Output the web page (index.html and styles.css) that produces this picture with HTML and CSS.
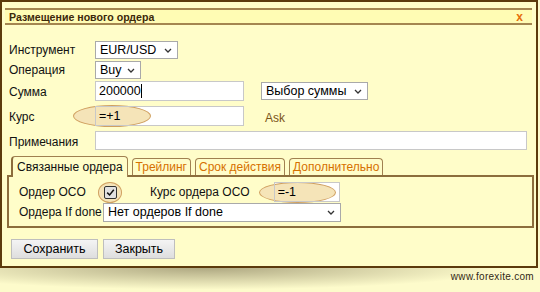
FILE: index.html
```html
<!DOCTYPE html>
<html lang="ru">

<head>
    <meta charset="UTF-8">
    <meta name="viewport" content="width=device-width, initial-scale=1.0">
    <title>Размещение нового ордера</title>
    <link rel="stylesheet" href="styles.css">
</head>

<body>
    <div class="dialog">
        <div class="titlebar">
            <span class="title">Размещение нового ордера</span>
            <span class="close">x</span>
        </div>
        <form class="order">
            <div class="row row-sel">
                <label class="lbl">Инструмент</label>
                <span class="selbox">
                    <select class="sel sel-instr"><option>EUR/USD</option></select>
                    <svg class="chev" width="8" height="5" viewBox="0 0 8 5"><path d="M1 1 L4 4 L7 1" fill="none" stroke="#333" stroke-width="1.3"/></svg>
                </span>
            </div>
            <div class="row row-sel">
                <label class="lbl">Операция</label>
                <span class="selbox">
                    <select class="sel sel-op"><option>Buy</option></select>
                    <svg class="chev" width="8" height="5" viewBox="0 0 8 5"><path d="M1 1 L4 4 L7 1" fill="none" stroke="#333" stroke-width="1.3"/></svg>
                </span>
            </div>
            <div class="row row-txt">
                <label class="lbl">Сумма</label>
                <div class="field">
                    <input class="txt txt-mid" type="text" value="200000">
                    <span class="caret"></span>
                </div>
                <span class="selbox sel-sum">
                    <select class="sel"><option>Выбор суммы</option></select>
                    <svg class="chev" width="8" height="5" viewBox="0 0 8 5"><path d="M1 1 L4 4 L7 1" fill="none" stroke="#333" stroke-width="1.3"/></svg>
                </span>
            </div>
            <div class="row row-txt">
                <label class="lbl">Курс</label>
                <div class="field">
                    <span class="oval oval-rate"></span>
                    <input class="txt txt-mid" type="text" value="=+1">
                </div>
                <span class="ask">Ask</span>
            </div>
            <div class="row row-note">
                <label class="lbl">Примечания</label>
                <input class="txt txt-wide" type="text">
            </div>

            <!-- вкладки -->
            <div class="tabs">
                <span class="tab active">Связанные ордера</span>
                <span class="tab">Трейлинг</span>
                <span class="tab">Срок действия</span>
                <span class="tab">Дополнительно</span>
            </div>
            <div class="panel">
                <div class="prow">
                    <label class="plbl">Ордер OCO</label>
                    <div class="field field-check">
                        <span class="oval oval-check"></span>
                        <span class="check">
                            <svg width="9" height="9" viewBox="0 0 9 9"><path d="M1.2 4.6 L3.6 7 L7.8 1.8" fill="none" stroke="#111" stroke-width="1.5"/></svg>
                        </span>
                    </div>
                    <label class="plbl plbl-rate">Курс ордера OCO</label>
                    <div class="field field-oco">
                        <span class="oval oval-oco"></span>
                        <input class="txt txt-oco" type="text" value="=-1">
                    </div>
                </div>
                <div class="prow">
                    <label class="plbl">Ордера If done</label>
                    <span class="selbox">
                        <select class="sel sel-done"><option>Нет ордеров If done</option></select>
                        <svg class="chev" width="8" height="5" viewBox="0 0 8 5"><path d="M1 1 L4 4 L7 1" fill="none" stroke="#333" stroke-width="1.3"/></svg>
                    </span>
                </div>
            </div>

            <div class="buttons">
                <button type="submit" class="btn btn-save">Сохранить</button>
                <button type="button" class="btn btn-close">Закрыть</button>
            </div>
        </form>
    </div>
    <div class="footer">
        <span class="site">www.forexite.com</span>
    </div>
</body>

</html>
```

FILE: styles.css
```css
body {
    margin: 0;
    padding: 0;
    background: rgb(253, 251, 203);
    font-family: "Liberation Sans", Arial, sans-serif;
    font-size: 12px;
    color: rgb(17, 17, 17);
}

.dialog {
    width: 538px;
    height: 268px;
    box-sizing: border-box;
    border: 2px solid rgb(92, 58, 12);
    background: rgb(255, 253, 201);
    padding-top: 6px;
}

.titlebar {
    margin: 0 4px 0 3px;
    height: 13px;
    border-top: 2px solid rgb(164, 134, 80);
    border-bottom: 2px solid rgb(164, 134, 80);
    background: rgb(255, 252, 180);
    display: flex;
    justify-content: space-between;
    align-items: center;
    padding: 0 9px 0 4px;
}

.title {
    font-size: 10.6px;
    font-weight: bold;
    color: rgb(60, 40, 10);
}

.close {
    font-size: 12px;
    font-weight: bold;
    color: rgb(230, 110, 10);
}

.order {
    padding: 16px 0 0 7px;
}

.row {
    display: flex;
    align-items: center;
    white-space: nowrap;
}

.row-sel {
    height: 20px;
    align-items: flex-start;
}

.row-txt,
.row-note {
    height: 25px;
    align-items: flex-start;
}

.lbl {
    width: 86px;
    padding-top: 3px;
}

.row-sel .lbl {
    padding-top: 2px;
}

.row-txt .lbl,
.row-note .lbl {
    padding-top: 4px;
}

/* выпадающие списки */
.selbox {
    position: relative;
    display: inline-flex;
}

.chev {
    position: absolute;
    right: 6px;
    top: 7px;
    pointer-events: none;
}

.sel {
    appearance: none;
    -webkit-appearance: none;
    font-family: "Liberation Sans", Arial, sans-serif;
    font-size: 12.5px;
    height: 18px;
    padding: 0 18px 0 4px;
    border: 1px solid rgb(169, 169, 169);
    border-radius: 0;
    background: white;
    color: black;
}

.sel-instr {
    width: 83px;
}

.sel-op {
    width: 46px;
}

.sel-sum {
    margin: 1px 0 0 17px;
}

.sel-sum .sel {
    width: 107px;
}

.sel-done {
    width: 238px;
    height: 19px;
}

.txt {
    font-family: "Liberation Sans", Arial, sans-serif;
    font-size: 12.5px;
    height: 20px;
    box-sizing: border-box;
    padding: 0 3px;
    border: 1px solid rgb(200, 200, 200);
    background: white;
    color: black;
    outline: none;
}

.txt-mid {
    width: 149px;
}

.txt-wide {
    width: 432px;
    height: 19px;
}

/* поле с выделением овалом: белый фон снизу, овал, затем прозрачное поле */
.field {
    position: relative;
    display: flex;
    align-items: center;
    background: white;
}

.field .txt {
    position: relative;
    z-index: 2;
    background: transparent;
}

.caret {
    position: absolute;
    z-index: 3;
    left: 46px;
    top: 3px;
    width: 1px;
    height: 14px;
    background: black;
}

.oval {
    position: absolute;
    z-index: 1;
    border: 1px solid rgb(208, 160, 96);
    background: rgb(245, 228, 184);
    border-radius: 50%;
}

.oval-rate {
    left: -22px;
    top: -1px;
    width: 76px;
    height: 20px;
}

.ask {
    margin: 5px 0 0 21px;
    color: rgb(122, 84, 24);
}

.tabs {
    display: flex;
    gap: 4px;
    margin: 0 0 0 2px;
    height: 19px;
    align-items: flex-end;
    position: relative;
    z-index: 1;
}

.tab {
    border: 1px solid rgb(160, 128, 80);
    border-bottom: none;
    border-radius: 4px 4px 0 0;
    padding: 1px 3px 0;
    height: 17px;
    box-sizing: border-box;
    color: rgb(214, 112, 0);
    background: rgb(255, 253, 201);
}

.tab.active {
    color: rgb(17, 17, 17);
    margin-bottom: -2px;
    padding: 3px 4px 0;
    height: 21px;
    border-left: 2px solid rgb(140, 108, 60);
}

.panel {
    margin-left: -2px;
    width: 527px;
    height: 53px;
    box-sizing: border-box;
    border: 2px solid rgb(140, 109, 60);
    padding: 5px 0 0 10px;
}

.prow {
    display: flex;
    align-items: center;
    height: 20px;
    white-space: nowrap;
}

.plbl {
    width: 84px;
}

.plbl-rate {
    width: auto;
    margin: 0 10px 0 33px;
}

.field-check {
    background: transparent;
    margin-left: 1px;
}

.check {
    position: relative;
    z-index: 2;
    display: flex;
    align-items: center;
    justify-content: center;
    width: 11px;
    height: 11px;
    border: 1px solid rgb(50, 50, 50);
    border-radius: 2px;
    background: rgb(225, 225, 225);
}

.oval-check {
    left: -6px;
    top: -4px;
    width: 22px;
    height: 19px;
}

.field-oco {
    margin-left: 14px;
}

.txt-oco {
    width: 66px;
}

.oval-oco {
    left: -15px;
    top: 0;
    width: 75px;
    height: 19px;
}

.buttons {
    display: flex;
    gap: 5px;
    margin-top: 11px;
    padding-left: 2px;
}

.btn {
    font-family: "Liberation Sans", Arial, sans-serif;
    font-size: 12.5px;
    height: 20px;
    padding: 0 8px;
    border: 1px solid rgb(190, 190, 190);
    background: linear-gradient(rgb(244, 244, 244), rgb(222, 222, 222));
    color: black;
}

.btn-save {
    width: 87px;
}

.btn-close {
    width: 72px;
}

.footer {
    height: 24px;
    display: flex;
    justify-content: flex-end;
    align-items: flex-start;
    padding-right: 6px;
    background: radial-gradient(ellipse 55% 90% at 38% 0, rgba(110, 100, 70, 0.55), rgba(110, 100, 70, 0) 100%);
}

.site {
    font-size: 10px;
    color: rgb(50, 40, 20);
    margin-top: 3px;
    letter-spacing: 0.3px;
}
```
